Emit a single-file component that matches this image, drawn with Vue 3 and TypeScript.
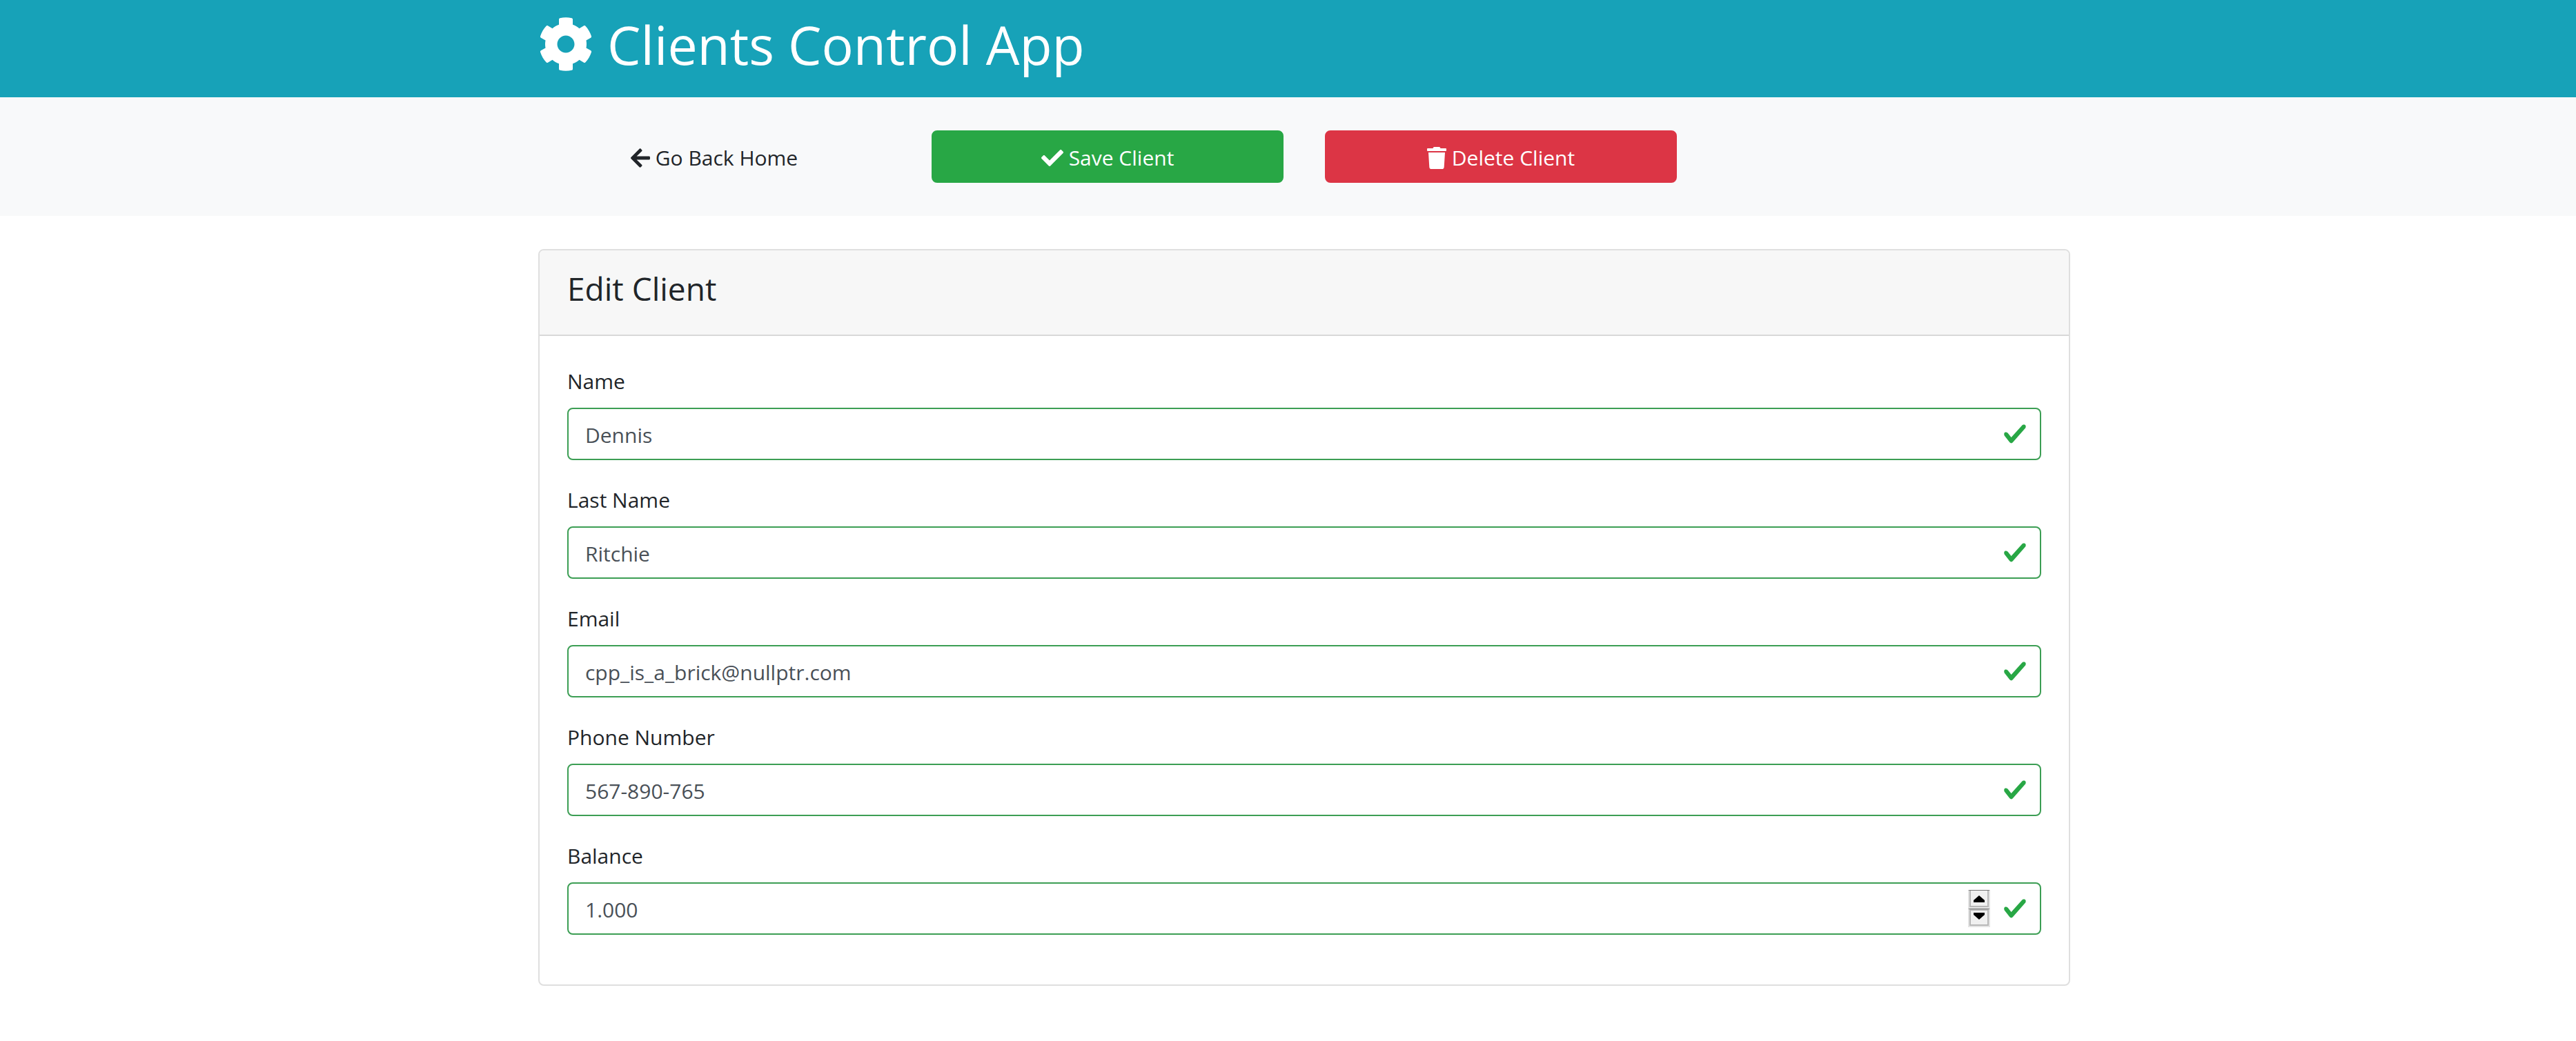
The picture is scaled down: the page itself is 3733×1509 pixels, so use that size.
<script setup lang="ts">
import { reactive } from 'vue'

interface Field {
  id: string
  label: string
  type: string
  value: string
}

const fields = reactive<Field[]>([
  { id: 'name', label: 'Name', type: 'text', value: 'Dennis' },
  { id: 'lastName', label: 'Last Name', type: 'text', value: 'Ritchie' },
  { id: 'email', label: 'Email', type: 'email', value: 'cpp_is_a_brick@nullptr.com' },
  { id: 'phone', label: 'Phone Number', type: 'text', value: '567-890-765' },
  { id: 'balance', label: 'Balance', type: 'number', value: '1.000' },
])

function step(field: Field, amount: number) {
  field.value = (Number(field.value) + amount).toFixed(3)
}
</script>

<template>
  <div class="page">
    <header class="header">
      <div class="container">
        <h1 class="title">
          <svg class="cog" viewBox="0 0 512 512" aria-hidden="true">
            <path fill="currentColor" d="M487.4 315.7l-42.6-24.6c4.3-23.2 4.3-47 0-70.2l42.6-24.6c4.9-2.8 7.1-8.6 5.5-14-11.1-35.6-30-67.8-54.7-94.6-3.8-4.1-10-5.1-14.8-2.3L380.8 110c-17.9-15.4-38.5-27.3-60.8-35.1V25.8c0-5.6-3.9-10.5-9.4-11.7-36.7-8.2-74.3-7.8-109.2 0-5.5 1.2-9.4 6.1-9.4 11.7V75c-22.2 7.9-42.8 19.8-60.8 35.1L88.7 85.5c-4.9-2.8-11-1.9-14.8 2.3-24.7 26.7-43.6 58.9-54.7 94.6-1.7 5.4.6 11.2 5.5 14L67.3 221c-4.3 23.2-4.3 47 0 70.2l-42.6 24.6c-4.9 2.8-7.1 8.6-5.5 14 11.1 35.6 30 67.8 54.7 94.6 3.8 4.1 10 5.1 14.8 2.3l42.6-24.6c17.9 15.4 38.5 27.3 60.8 35.1v49.2c0 5.6 3.9 10.5 9.4 11.7 36.7 8.2 74.3 7.8 109.2 0 5.5-1.2 9.4-6.1 9.4-11.7v-49.2c22.2-7.9 42.8-19.8 60.8-35.1l42.6 24.6c4.9 2.8 11 1.9 14.8-2.3 24.7-26.7 43.6-58.9 54.7-94.6 1.5-5.5-.7-11.3-5.6-14.1zM256 336c-44.1 0-80-35.9-80-80s35.9-80 80-80 80 35.9 80 80-35.9 80-80 80z" />
          </svg>
          <span>Clients Control App</span>
        </h1>
      </div>
    </header>

    <section class="actions">
      <div class="container action-row">
        <a href="#" class="btn btn-light">
          <svg class="icon narrow" viewBox="0 0 448 512" aria-hidden="true">
            <path fill="currentColor" d="M257.5 445.1l-22.2 22.2c-9.4 9.4-24.6 9.4-33.9 0L7 273c-9.4-9.4-9.4-24.6 0-33.9L201.4 44.7c9.4-9.4 24.6-9.4 33.9 0l22.2 22.2c9.5 9.5 9.3 25-.4 34.3L136.6 216H424c13.3 0 24 10.7 24 24v32c0 13.3-10.7 24-24 24H136.6l120.5 114.8c9.8 9.3 10 24.8.4 34.3z" />
          </svg>
          <span>Go Back Home</span>
        </a>
        <button type="submit" form="clientForm" class="btn btn-success">
          <svg class="icon" viewBox="0 0 512 512" aria-hidden="true">
            <path fill="currentColor" d="M173.898 439.404l-166.4-166.4c-9.997-9.997-9.997-26.206 0-36.204l36.203-36.204c9.997-9.998 26.207-9.998 36.204 0L192 312.69 432.095 72.596c9.997-9.997 26.207-9.997 36.204 0l36.203 36.204c9.997 9.997 9.997 26.206 0 36.204l-294.4 294.401c-9.998 9.997-26.207 9.997-36.204-.001z" />
          </svg>
          <span>Save Client</span>
        </button>
        <button type="button" class="btn btn-danger">
          <svg class="icon narrow" viewBox="0 0 448 512" aria-hidden="true">
            <path fill="currentColor" d="M432 32H312l-9.4-18.7A24 24 0 0 0 281.1 0H166.8a23.72 23.72 0 0 0-21.4 13.3L136 32H16A16 16 0 0 0 0 48v32a16 16 0 0 0 16 16h416a16 16 0 0 0 16-16V48a16 16 0 0 0-16-16zM32 128l21.2 339a48 48 0 0 0 47.9 45h245.8a48 48 0 0 0 47.9-45L416 128z" />
          </svg>
          <span>Delete Client</span>
        </button>
      </div>
    </section>

    <main class="content">
      <div class="container">
        <div class="card">
          <div class="card-header">
            <h4>Edit Client</h4>
          </div>
          <form id="clientForm" class="card-body" novalidate @submit.prevent>
            <div v-for="field in fields" :key="field.id" class="form-group">
              <label :for="field.id">{{ field.label }}</label>
              <div class="control">
                <input :id="field.id" v-model.lazy="field.value" :type="field.type" :name="field.id" step="any" />
                <div v-if="field.type === 'number'" class="stepper">
                  <button type="button" class="up" aria-label="Increase" @click="step(field, 1)">
                    <svg viewBox="0 0 16 10" aria-hidden="true"><path d="M8 0L16 7V10H0V7Z" /></svg>
                  </button>
                  <button type="button" class="down" aria-label="Decrease" @click="step(field, -1)">
                    <svg viewBox="0 0 16 10" aria-hidden="true"><path d="M8 10L16 3V0H0V3Z" /></svg>
                  </button>
                </div>
                <svg class="valid" viewBox="0 0 8 8" aria-hidden="true">
                  <path fill="#28a745" d="M2.3 6.73L.6 4.53c-.4-1.04.46-1.4 1.1-.8l1.1 1.4 3.4-3.8c.6-.63 1.6-.27 1.2.7l-4 4.6c-.43.5-.8.4-1.1.1z" />
                </svg>
              </div>
            </div>
          </form>
        </div>
      </div>
    </main>
  </div>
</template>

<style>
body {
  margin: 0;
  background: #fff;
}
</style>

<style scoped>
* {
  box-sizing: border-box;
}

.page {
  font-family: "Open Sans", "Noto Sans", sans-serif;
  font-size: 30px;
  line-height: 48px;
  color: #212529;
}

.header,
.actions,
.content {
  padding-left: 47px;
}

.container {
  width: 100%;
  max-width: 2280px;
  margin: 0 auto;
  padding: 0 30px;
}

.header {
  padding-top: 16px;
  padding-bottom: 27px;
  background: #17a2b8;
  color: #fff;
}

.title {
  display: flex;
  align-items: flex-start;
  gap: 20px;
  margin: 0;
  font-size: 77px;
  font-weight: 400;
  line-height: 98px;
}

.cog {
  width: 80px;
  height: 80px;
  margin-top: 8px;
}

.actions {
  padding-top: 48px;
  padding-bottom: 48px;
  background: #f8f9fa;
}

.action-row {
  display: grid;
  grid-template-columns: repeat(4, 1fr);
  gap: 60px;
}

.btn {
  display: flex;
  align-items: center;
  justify-content: center;
  gap: 8px;
  height: 76px;
  padding: 14px 24px 10px;
  border: 2px solid transparent;
  border-radius: 8px;
  font: inherit;
  text-decoration: none;
  cursor: pointer;
}

.btn-light {
  background: #f8f9fa;
  color: #212529;
}

.btn-success {
  background: #28a745;
  border-color: #28a745;
  color: #fff;
}

.btn-danger {
  background: #dc3545;
  border-color: #dc3545;
  color: #fff;
}

.icon {
  width: 32px;
  height: 32px;
}

.icon.narrow {
  width: 28px;
}

.content {
  padding-top: 48px;
  padding-bottom: 48px;
}

.card {
  border: 2px solid #dfdfdf;
  border-radius: 8px;
  background: #fff;
}

.card-header {
  padding: 26px 40px 38px;
  border-bottom: 2px solid #d8d8d8;
  border-radius: 6px 6px 0 0;
  background: #f7f7f7;
}

.card-header h4 {
  margin: 0;
  font-size: 46px;
  font-weight: 400;
  line-height: 58px;
}

.card-body {
  padding: 40px;
}

.form-group {
  margin-bottom: 32px;
}

label {
  display: block;
  margin-bottom: 13px;
  line-height: 51px;
}

.control {
  position: relative;
}

input {
  display: block;
  width: 100%;
  height: 76px;
  padding: 13px 72px 11px 24px;
  border: 2px solid #3c9e54;
  border-radius: 8px;
  background: #fff;
  color: #495057;
  font: inherit;
  outline: none;
}

input[type="number"] {
  appearance: textfield;
  padding-right: 112px;
}

input[type="number"]::-webkit-inner-spin-button {
  appearance: none;
  margin: 0;
}

.valid {
  position: absolute;
  top: 20px;
  right: 20px;
  width: 36px;
  height: 36px;
  pointer-events: none;
}

.stepper {
  position: absolute;
  top: 11px;
  right: 74px;
  width: 32px;
  height: 54px;
  background: #f0f0f0;
}

.stepper button {
  display: flex;
  justify-content: center;
  align-items: flex-start;
  width: 32px;
  height: 27px;
  padding: 5px 0 0;
  border: 2px solid #e4e4e4;
  border-top: 1px solid #777;
  background: #f0f0f0;
  box-shadow: inset 0 0 0 2px #b8b8b8;
}

.stepper .up {
  padding-top: 7px;
  box-shadow: inset 2px 0 #b8b8b8, inset -2px -2px #b8b8b8;
}

.stepper svg {
  width: 16px;
  height: 10px;
}
</style>
